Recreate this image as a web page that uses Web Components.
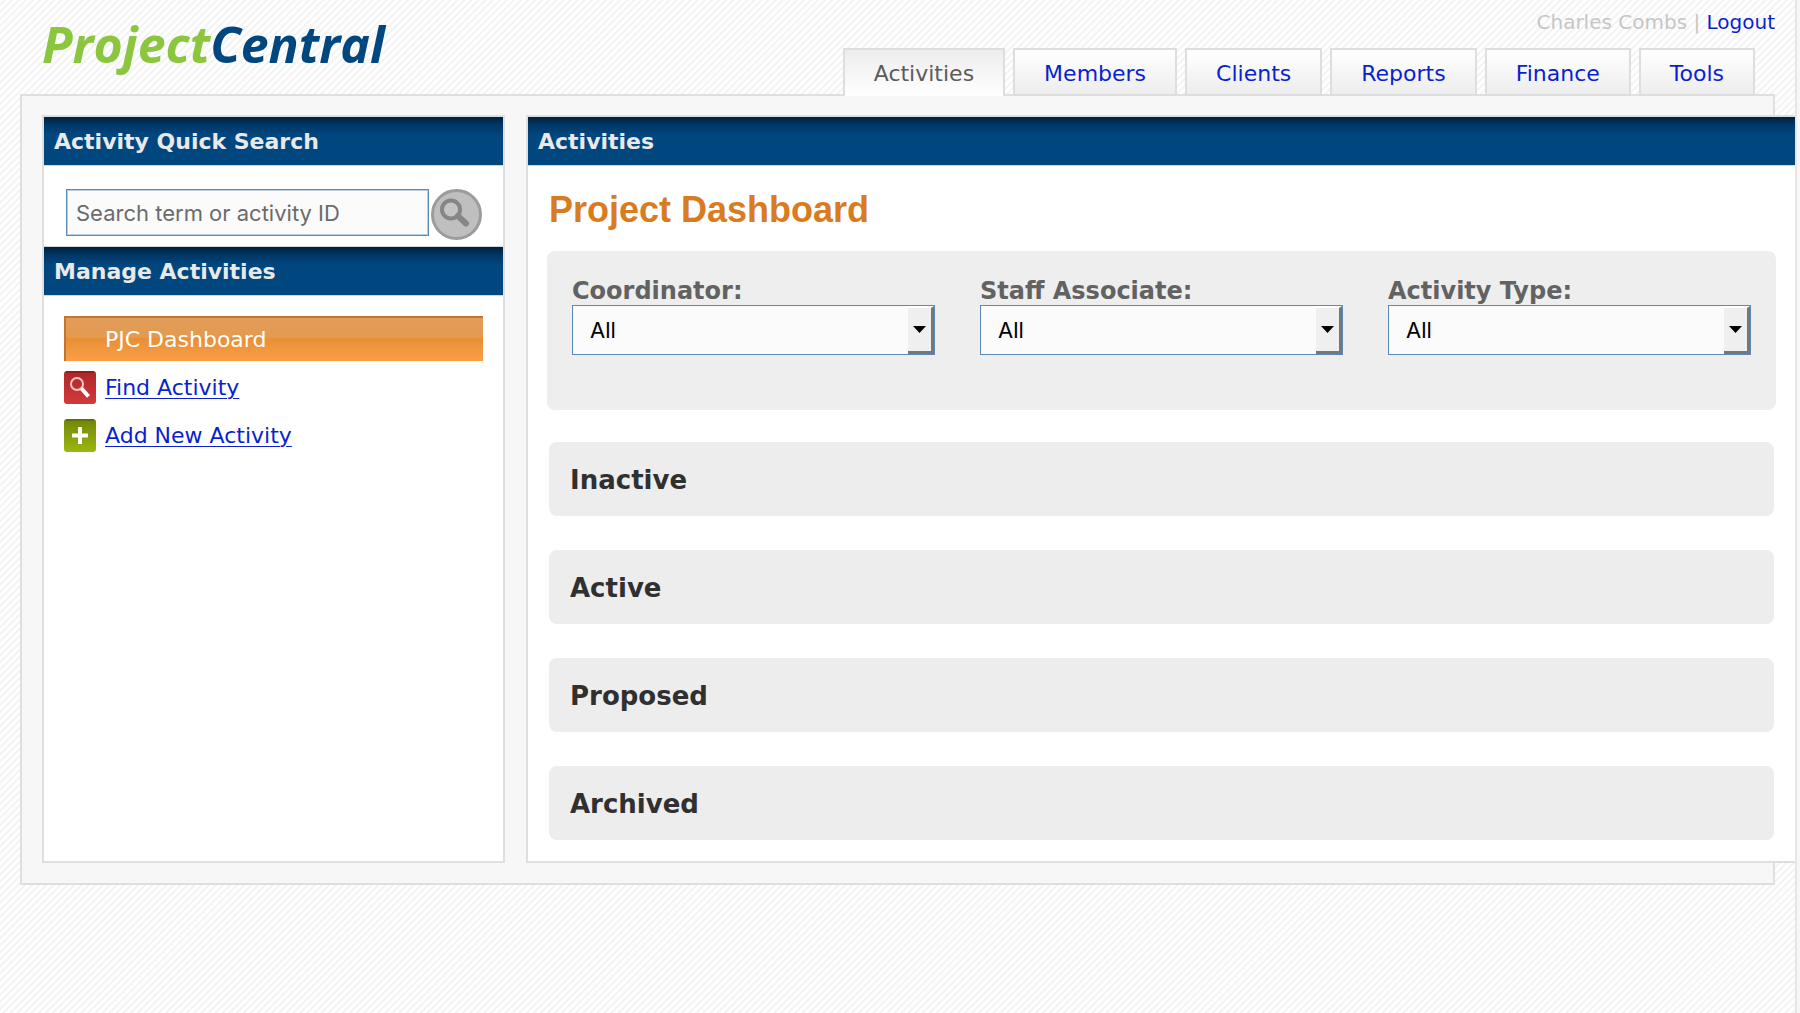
<!DOCTYPE html>
<html lang="en">
<head>
<meta charset="utf-8">
<title>ProjectCentral</title>
<style>
html{min-height:100%;background:#fcfcfc repeating-linear-gradient(135deg,#fff 0 2px,#f3f3f3 3px 4px,#fff 5px)}
body{margin:0;font:22px/28px "DejaVu Sans",Verdana,sans-serif;color:#333}
</style>
</head>
<body>
<pc-app></pc-app>
<script>
const define = (name, html, setup) => {
  const t = document.createElement('template');
  t.innerHTML = `<style>*{box-sizing:border-box}a{color:#0a1fd0}</style>` + html;
  customElements.define(name, class extends HTMLElement {
    constructor() {
      super();
      this.attachShadow({mode: 'open'}).append(t.content.cloneNode(true));
    }
    connectedCallback() { if (setup) setup(this, this.shadowRoot); }
  });
};

define('pc-logo', `
<style>
:host{display:block}
a{font:italic 700 50px/60px "Open Sans","Noto Sans",sans-serif;color:#8cc63f;text-decoration:none}
span{color:#00467f}
</style>
<a href="#">Project<span>Central</span></a>`);

define('pc-tab', `
<style>
:host{display:block}
a{display:block;height:48px;padding:0 29px;line-height:48px;border:2px solid #dedede;background:linear-gradient(#fff,#ededed);text-decoration:none}
:host([current]) a{color:#5c5c5c;background:linear-gradient(#ededed,#fff);border-bottom:0}
</style>
<a href="#"><slot></slot></a>`);

define('pc-header', `
<style>
:host{display:flex;justify-content:space-between;align-items:flex-start;padding-left:22px}
pc-logo{padding-top:14px}
.side{display:flex;flex-direction:column;align-items:flex-end}
.user{height:48px;line-height:44px;font-size:20px;color:#c6c6c6}
.user a{text-decoration:none}
nav{display:flex;gap:8px;margin:0 20px -2px 0;position:relative}
</style>
<pc-logo></pc-logo>
<div class="side">
<div class="user">Charles Combs | <a href="#">Logout</a></div>
<nav><pc-tab current>Activities</pc-tab><pc-tab>Members</pc-tab><pc-tab>Clients</pc-tab><pc-tab>Reports</pc-tab><pc-tab>Finance</pc-tab><pc-tab>Tools</pc-tab></nav>
</div>`);

define('pc-bar', `
<style>
:host{display:block;border-bottom:1px solid #d6d6d6}
h2{margin:0;padding:0 10px;height:48px;font-size:22px;line-height:50px;color:#e9e9e9;background:linear-gradient(#00203c,#003765 8px,#00467f 18px)}
</style>
<h2><slot></slot></h2>`);

define('pc-search', `
<style>
:host{display:block}
form{display:flex;gap:2px;padding:23px 21px 6px 22px}
input{flex:1;min-width:0;height:47px;margin:0;padding:0 9px;border:1px solid #5b8ab8;outline:1px solid #b9cde0;outline-offset:-2px;background:#fbfbfb;font:22px Inter,sans-serif;color:#333}
input::placeholder{color:#6b6b6b;opacity:1}
button{flex:none;width:51px;height:51px;padding:0;border:0;background:none}
svg{display:block}
</style>
<form><input type="text" aria-label="Activity search" placeholder="Search term or activity ID">
<button type="button" aria-label="Search"><svg width="51" height="51" viewBox="0 0 51 51"><circle cx="25.500" cy="25.500" r="24" fill="#bfbfbf" stroke="#9c9c9c" stroke-width="3"/><circle cx="20" cy="20.500" r="9" fill="#c4c4c4" stroke="#868686" stroke-width="4"/><path d="M27 27l8 7.500" stroke="#868686" stroke-width="6" stroke-linecap="round"/></svg></button></form>`);

define('pc-menu', `
<style>
:host{display:block;padding:20px 20px 0}
ul{list-style:none;margin:0;padding:0}
li{display:flex;height:48px;align-items:center;gap:9px}
li.on{height:45px;margin-bottom:2px;padding-left:41px;background:linear-gradient(#e29d5a,#e39a50 50%,#e88f35 50%,#fa9f45);box-shadow:inset 2px 2px #c07530,inset 0 1px #91500f}
li.on a{color:#fff;text-decoration:none}
a{padding-top:2px;text-underline-offset:3px;text-decoration-thickness:1px}
svg{flex:none}
</style>
<ul>
<li class="on"><a href="#">PJC Dashboard</a></li>
<li><svg width="32" height="33" viewBox="0 0 32 33"><defs><linearGradient id="r" x2="0" y2="1"><stop stop-color="#ad2727"/><stop offset="1" stop-color="#d23a3a"/></linearGradient></defs><rect width="32" height="33" rx="3" fill="url(#r)"/><path d="M2 1h28" stroke="#961b1b" stroke-width="2"/><circle cx="13" cy="13" r="6" fill="none" stroke="#f0c8c8" stroke-width="2"/><path d="M17.500 17.500l7 8" stroke="#fff" stroke-width="4"/></svg><a href="#">Find Activity</a></li>
<li><svg width="32" height="33" viewBox="0 0 32 33"><defs><linearGradient id="g" x2="0" y2="1"><stop stop-color="#70860a"/><stop offset="1" stop-color="#9db60f"/></linearGradient></defs><rect width="32" height="33" rx="3" fill="url(#g)"/><path d="M2 1h28" stroke="#5d700a" stroke-width="2"/><path d="M16 8v17M8 16.500h16" stroke="#fff" stroke-width="4"/></svg><a href="#">Add New Activity</a></li>
</ul>`);

define('pc-filter', `
<style>
:host{display:block;flex:1}
label{display:block;height:30px;font-weight:bold;font-size:24px;line-height:32px;color:#626262}
.box{display:grid;grid-template-columns:1fr 26px;height:50px;border:1px solid #5b8ab8;background:#fbfbfb}
select{grid-area:1/1/2/3;appearance:none;width:100%;border:0;background:none;padding:0 17px;font:22px Inter,sans-serif;color:#000}
.arrow{grid-area:1/2;display:grid;place-items:center;background:#efefef;border:solid #fff;border-width:2px 3px 3px 0;border-right-color:#777;border-bottom-color:#777;pointer-events:none}
svg{display:block}
</style>
<label for="s"></label>
<div class="box"><span class="arrow"><svg width="13" height="7" viewBox="0 0 13 7"><path d="M0 0h13l-6.500 7z"/></svg></span><select id="s"><option>All</option></select></div>`,
(host, root) => { root.querySelector('label').textContent = host.getAttribute('label'); });

define('pc-section', `
<style>
:host{display:block}
h3{margin:0 2px;padding:0 21px;height:74px;font-size:26px;line-height:76px;border-radius:8px;background:#ededed;color:#303030}
</style>
<h3><slot></slot></h3>`);

define('pc-dashboard', `
<style>
:host{display:block;padding:23px 19px 21px}
h1{margin:0 2px 20px;font:bold 36px/42px "Liberation Sans",Arial,sans-serif;color:#d97b20}
.filters{display:flex;gap:45px;height:159px;padding:24px 25px;border-radius:8px;background:#eee}
.sections{display:grid;gap:34px;margin-top:32px}
</style>
<h1>Project Dashboard</h1>
<div class="filters"><pc-filter label="Coordinator:"></pc-filter><pc-filter label="Staff Associate:"></pc-filter><pc-filter label="Activity Type:"></pc-filter></div>
<div class="sections"><pc-section>Inactive</pc-section><pc-section>Active</pc-section><pc-section>Proposed</pc-section><pc-section>Archived</pc-section></div>`);

define('pc-app', `
<style>
:host{display:flex;flex-direction:column;min-height:100vh;padding:0 25px 0 20px;box-shadow:inset -3px 0 #f7f7f7,inset -5px 0 #e6e6e6}
pc-header{height:94px}
.frame{display:flex;gap:21px;border:2px solid #dfdfdf;background:#f7f7f7;padding:19px 0 20px 20px}
.panel{border:2px solid #dfdfdf;background:#fff}
aside{flex:0 0 463px}
pc-search{border-bottom:1px solid #d6d6d6}
main{flex:1;min-width:0;margin-right:-22px}
main.panel{border-right:0}
</style>
<pc-header></pc-header>
<div class="frame">
<aside class="panel"><pc-bar>Activity Quick Search</pc-bar><pc-search></pc-search><pc-bar>Manage Activities</pc-bar><pc-menu></pc-menu></aside>
<main class="panel"><pc-bar>Activities</pc-bar><pc-dashboard></pc-dashboard></main>
</div>`);
</script>
</body>
</html>
